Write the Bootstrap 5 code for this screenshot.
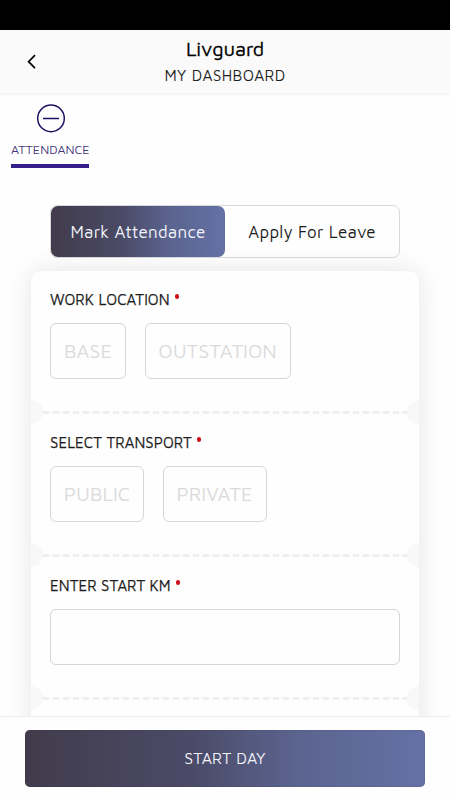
<!DOCTYPE html>
<html lang="en">
<head>
<meta charset="utf-8">
<meta name="viewport" content="width=device-width, initial-scale=1">
<title>Livguard - My Dashboard</title>
<link href="https://cdn.jsdelivr.net/npm/bootstrap@5.3.0/dist/css/bootstrap.min.css" rel="stylesheet">
<style>
  body { font-family: "Maven Pro", "Noto Sans", "Open Sans", sans-serif; color: #1c1c1c; height: 800px; background: #fefefe; }
  .status-bar { height: 30px; background: #000; }
  .app-header { height: 63px; background: #fafafa; box-shadow: 0 1px 3px rgba(0,0,0,.07); z-index: 2; }
  .header-side { width: 62px; padding-left: 26px; }
  .brand-name { font-size: 20px; line-height: 26px; font-weight: 450; color: #000; letter-spacing: -.1px; padding-top: 6px; -webkit-text-stroke: .3px #000; }
  .page-name { font-size: 15.6px; line-height: 26px; font-weight: 300; color: #222; letter-spacing: .35px; }
  .tab-item { width: 78px; margin: 11px 0 0 11px; color: #45377c; border-bottom: 4px solid #35208a; height: 64px; }
  .tab-label { font-size: 12.5px; line-height: 18px; font-weight: 300; margin-top: 8px; }
  .seg { margin: 37px 50px 0 50px; height: 53px; border: 1px solid #d8d9dc; border-radius: 7px; font-size: 17px; font-weight: 300; letter-spacing: .25px; }
  .seg > div { padding-top: 3px; }
  .seg-on { width: 174px; border-radius: 7px; color: #f3f4fb; }
  .grad { background: linear-gradient(90deg, #413b4b 0%, #4b4b68 42%, #5b648f 68%, #6571a5 100%); }
  .panel { margin: 13px 31px 0; height: 500px; border-radius: 10px 10px 0 0; background: #fefefe; box-shadow: 0 0 26px rgba(0,0,0,.1); overflow: hidden; }
  .sect { height: 143px; padding: 19px 19px 0; }
  .sect-title { font-size: 15px; line-height: 20px; font-weight: 450; letter-spacing: .05px; -webkit-text-stroke: .25px #1c1c1c; }
  .req { width: 4.6px; height: 4.6px; border-radius: 50%; background: #d0101a; margin: 4px 0 0 5px; }
  .opt { height: 56px; border: 1px solid #d6d6d8; border-radius: 6px; color: #dadada; font-size: 20px; font-weight: 300; }
  .fields { margin-top: 13px; gap: 19px; }
  .opt-base { width: 76px; }
  .opt-out { width: 146px; padding-right: 1px; }
  .opt-public { width: 94px; }
  .opt-private { width: 104px; padding-right: 1px; }
  .tear { position: absolute; left: 0; right: 0; bottom: -10px; height: 24px; z-index: 1; }
  .notch { width: 12px; background: #f8f8f8; clip-path: circle(12px at 0 50%); }
  .notch-end { clip-path: circle(12px at 100% 50%); }
  .dash { height: 3px; background: repeating-linear-gradient(90deg, #efefef 0 6px, #fbfbfb 6px 10px); }
  .foot { height: 84px; background: #fefefe; border-top: 1px solid #ececec; padding: 13px 25px 0; z-index: 3; }
  .start { height: 57px; border-radius: 5px; font-size: 16px; font-weight: 300; color: #f3f4fb; box-shadow: inset 0 0 1px rgba(20,20,50,.6); letter-spacing: .1px; padding-bottom: 2px; }
</style>
</head>
<body class="d-flex flex-column overflow-hidden mx-auto">
  <div class="status-bar flex-shrink-0"></div>
  <header class="app-header d-flex flex-shrink-0 position-relative">
    <div class="header-side d-flex align-items-center">
      <svg width="11" height="15" viewBox="0 0 11 15" fill="none" stroke="#000" stroke-width="1.7"><path d="M9 1.2 2.6 7.7 9 14.2"/></svg>
    </div>
    <div class="flex-grow-1 text-center">
      <div class="brand-name">Livguard</div>
      <div class="page-name">MY DASHBOARD</div>
    </div>
    <div class="header-side"></div>
  </header>
  <main class="flex-grow-1 overflow-hidden">
    <div class="tab-item text-center">
      <svg class="d-block" width="78" height="29" viewBox="0 0 78 29" fill="none" stroke="#211061" stroke-width="1.5"><circle cx="40" cy="14.4" r="13.3"/><path d="M32 14.5h16"/></svg>
      <div class="tab-label text-nowrap">ATTENDANCE</div>
    </div>
    <div class="seg d-flex">
      <div class="seg-on grad d-flex align-items-center justify-content-center text-nowrap">Mark Attendance</div>
      <div class="flex-grow-1 d-flex align-items-center justify-content-center text-nowrap">Apply For Leave</div>
    </div>
    <div class="panel">
      <section class="sect position-relative">
        <div class="sect-title d-flex"><span>WORK LOCATION</span><i class="req"></i></div>
        <div class="fields d-flex">
          <div class="opt opt-base d-flex align-items-center justify-content-center">BASE</div>
          <div class="opt opt-out d-flex align-items-center justify-content-center">OUTSTATION</div>
        </div>
        <div class="tear d-flex align-items-center"><span class="notch h-100"></span><span class="dash flex-grow-1"></span><span class="notch notch-end h-100"></span></div>
      </section>
      <section class="sect position-relative">
        <div class="sect-title d-flex"><span>SELECT TRANSPORT</span><i class="req"></i></div>
        <div class="fields d-flex">
          <div class="opt opt-public d-flex align-items-center justify-content-center">PUBLIC</div>
          <div class="opt opt-private d-flex align-items-center justify-content-center">PRIVATE</div>
        </div>
        <div class="tear d-flex align-items-center"><span class="notch h-100"></span><span class="dash flex-grow-1"></span><span class="notch notch-end h-100"></span></div>
      </section>
      <section class="sect position-relative">
        <div class="sect-title d-flex"><span>ENTER START KM</span><i class="req"></i></div>
        <div class="fields"><div class="opt"></div></div>
        <div class="tear d-flex align-items-center"><span class="notch h-100"></span><span class="dash flex-grow-1"></span><span class="notch notch-end h-100"></span></div>
      </section>
    </div>
  </main>
  <footer class="foot flex-shrink-0 position-relative">
    <div class="start grad d-flex align-items-center justify-content-center">START DAY</div>
  </footer>
<script src="https://cdn.jsdelivr.net/npm/bootstrap@5.3.0/dist/js/bootstrap.bundle.min.js"></script>
</body>
</html>
